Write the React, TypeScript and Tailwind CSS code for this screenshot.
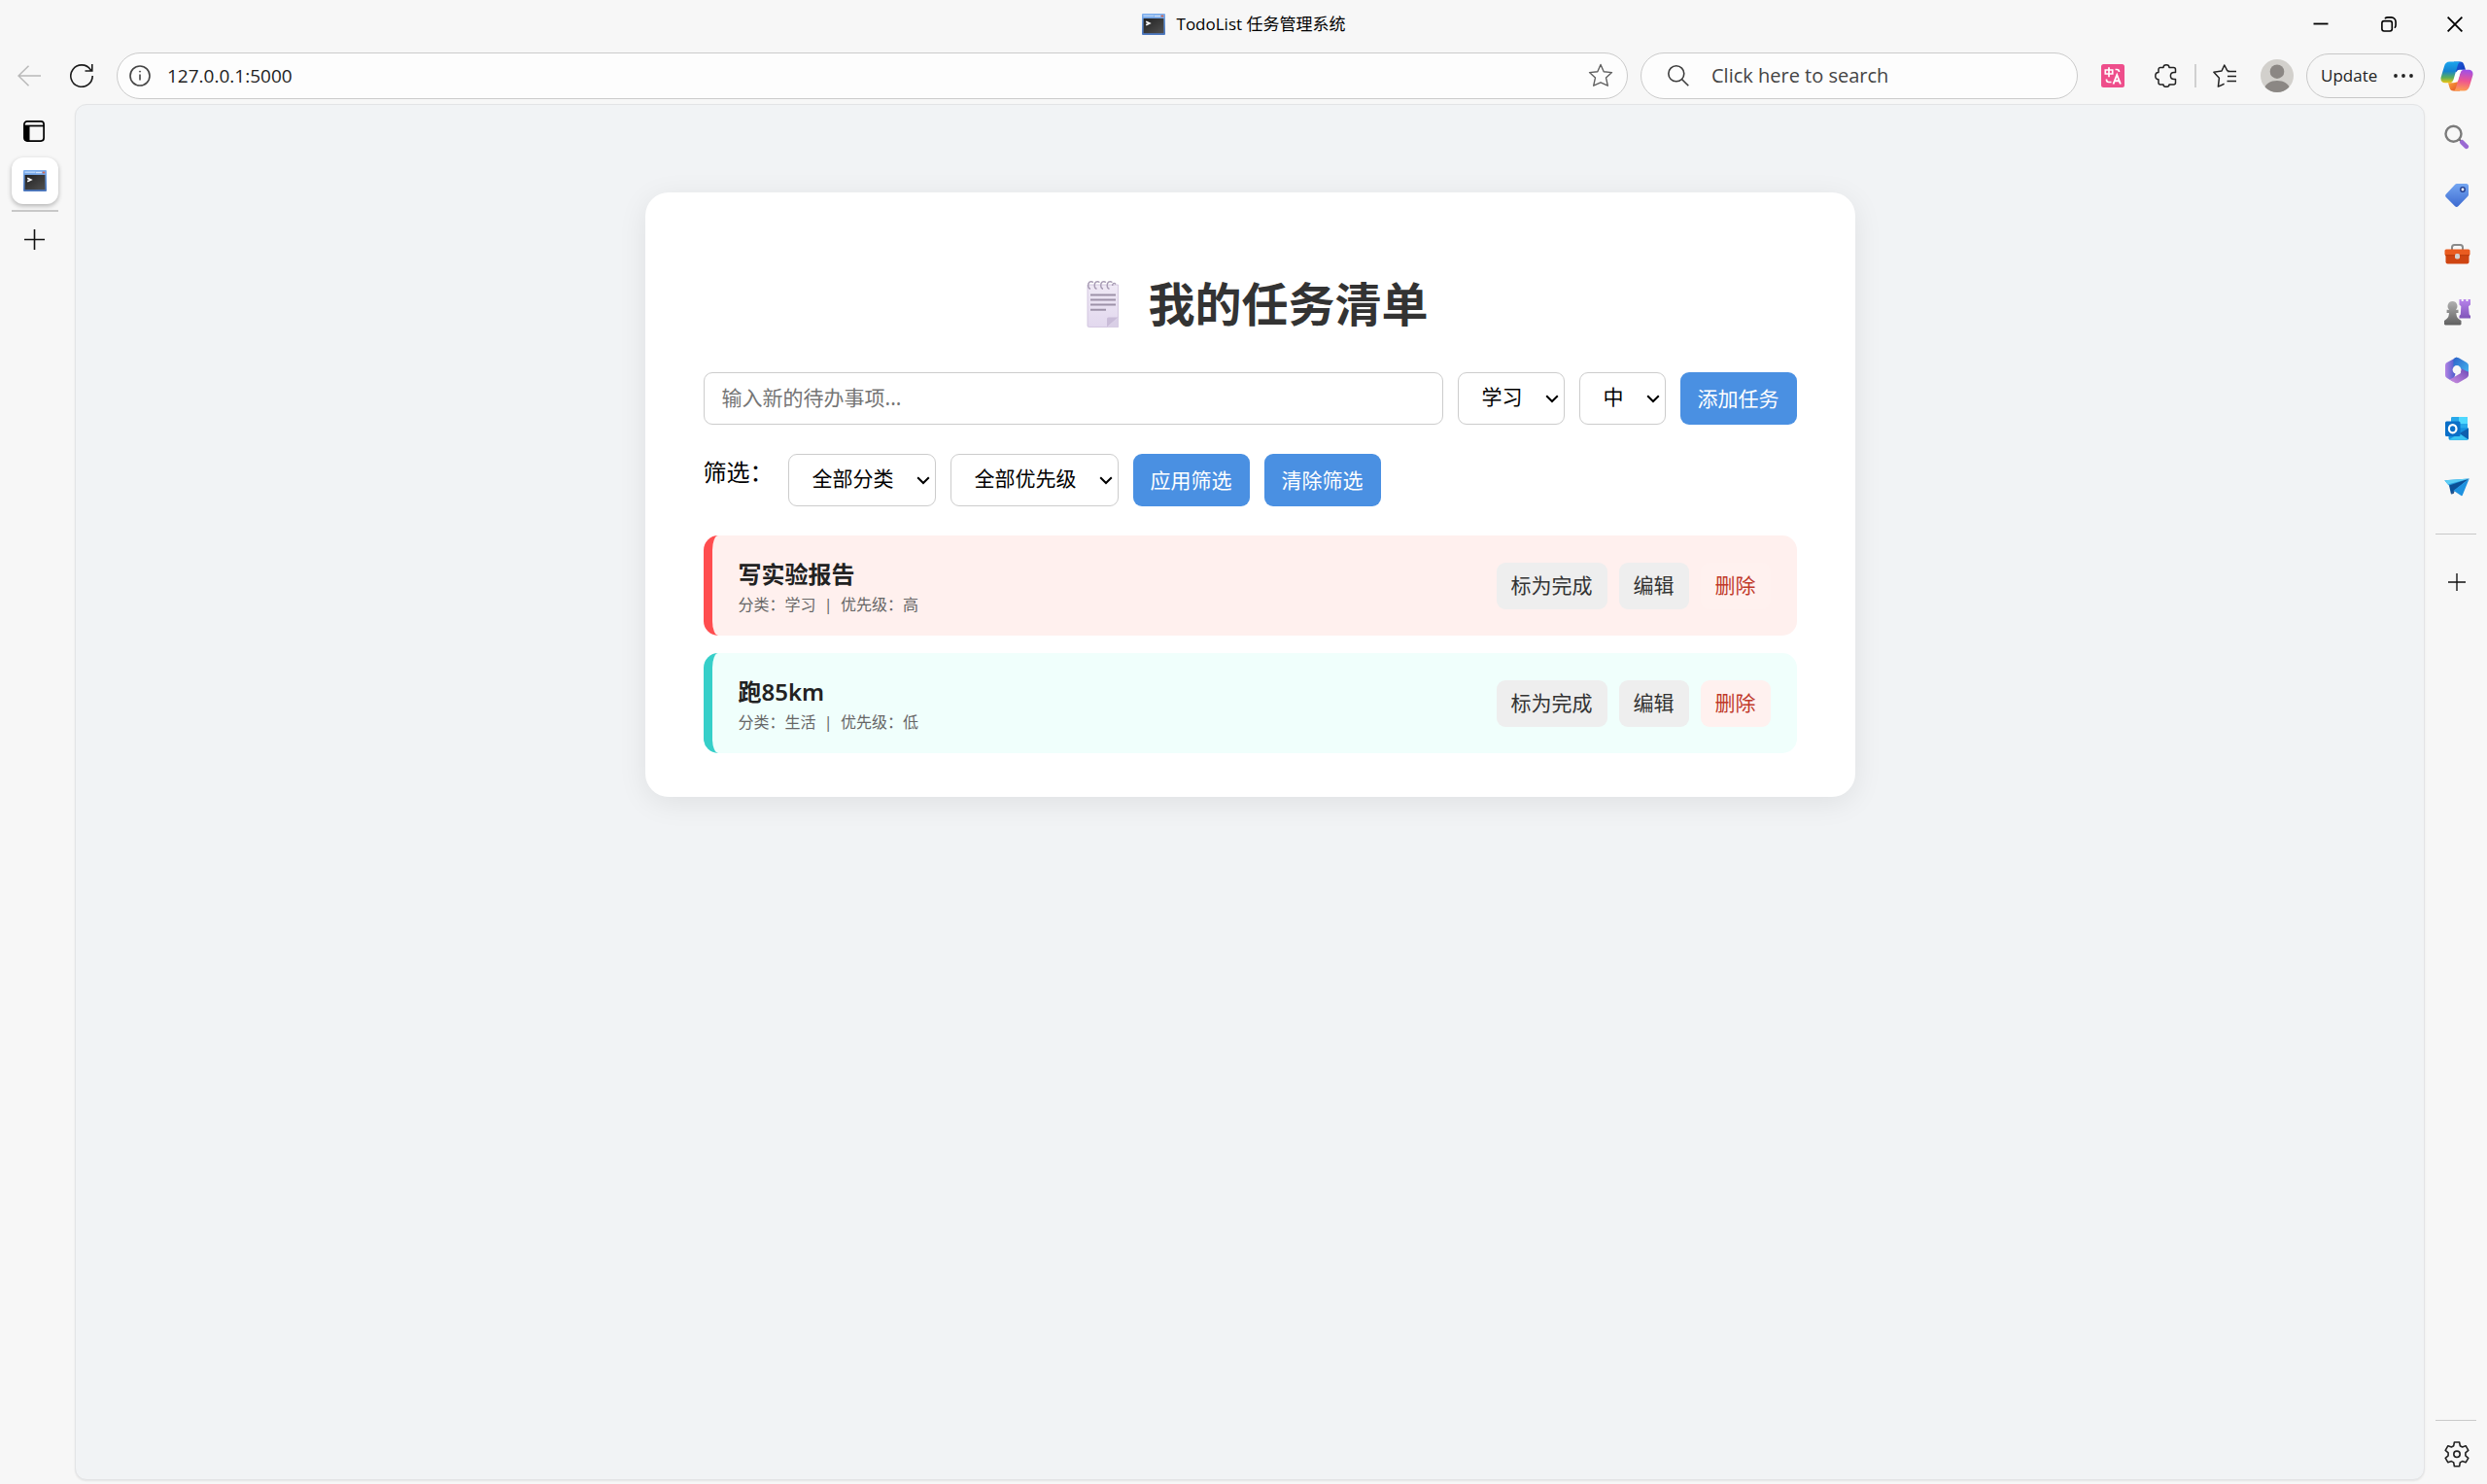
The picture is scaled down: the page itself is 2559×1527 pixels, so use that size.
import React, { useState } from "react";

const CHROME_FONT = "font-['Open_Sans','Noto_Sans_CJK_SC',sans-serif]";

function TerminalIcon() {
  return (
    <svg width="24" height="22" viewBox="0 0 24 22" aria-hidden="true">
      <defs>
        <linearGradient id="termFrame" x1="0" y1="0" x2="0" y2="1">
          <stop offset="0" stopColor="#7fb0ee" />
          <stop offset="1" stopColor="#4a76bf" />
        </linearGradient>
        <linearGradient id="termBody" x1="0" y1="0" x2="1" y2="1">
          <stop offset="0" stopColor="#222" />
          <stop offset="1" stopColor="#505050" />
        </linearGradient>
      </defs>
      <rect width="24" height="22" rx="1" fill="url(#termFrame)" />
      <rect x="1.5" y="1.5" width="11" height="1.6" fill="#b4d2f8" />
      <rect x="13" y="1.8" width="6" height="1.4" fill="#d5e4f8" />
      <rect x="19.8" y="1.6" width="2.4" height="1.8" fill="#d8674f" />
      <rect x="1.6" y="5" width="20.8" height="15.2" fill="url(#termBody)" />
      <path d="M4.2 8.2 7.8 10 4.2 11.8" fill="none" stroke="#fff" strokeWidth="1.7" />
    </svg>
  );
}

function IconButton({ label, className = "", children }: { label: string; className?: string; children: React.ReactNode }) {
  return (
    <button type="button" aria-label={label} className={`flex shrink-0 items-center justify-center ${className}`}>
      {children}
    </button>
  );
}

function PlusIcon({ size }: { size: number }) {
  return (
    <svg width={size} height={size} viewBox="0 0 21 21" fill="none" stroke="#111" strokeWidth="1.6" aria-hidden="true">
      <path d="M10.5 0v21M0 10.5h21" />
    </svg>
  );
}

function TitleBar() {
  return (
    <header className="flex h-[50px] items-center">
      <div className="flex-1" />
      <div className="flex items-center gap-3">
        <TerminalIcon />
        <span className={`${CHROME_FONT} text-[17px] leading-6 whitespace-nowrap text-black`}>TodoList 任务管理系统</span>
      </div>
      <div className="flex flex-1 items-center justify-end">
        <IconButton label="Minimize" className="h-12 w-[70px]">
          <svg width="16" height="16" viewBox="0 0 16 16" stroke="#000" strokeWidth="1.8" aria-hidden="true"><path d="M.5 7.5h15" /></svg>
        </IconButton>
        <IconButton label="Restore" className="h-12 w-[70px]">
          <svg width="16" height="16" viewBox="0 0 16 16" fill="none" stroke="#000" strokeWidth="1.6" strokeLinecap="round" aria-hidden="true">
            <rect x=".9" y="4.6" width="10.4" height="10.4" rx="2.2" />
            <path d="M4.400 1.600C5 1 5.800.900 6.800.900h3.800A4.500 4.500 0 0 1 15.100 5.400v3.400c0 1-.2 1.800-.8 2.400" />
          </svg>
        </IconButton>
        <IconButton label="Close" className="h-12 w-[66px]">
          <svg width="16" height="16" viewBox="0 0 16 16" stroke="#000" strokeWidth="1.8" aria-hidden="true"><path d="m.6.6 14.8 14.8M15.4.6.6 15.4" /></svg>
        </IconButton>
      </div>
    </header>
  );
}

function CopilotIcon() {
  return (
    <svg width="34" height="31" viewBox="0 0 34 31" aria-hidden="true">
      <defs>
        <linearGradient id="cpA" x1="0" y1="0" x2="0" y2="1">
          <stop offset="0" stopColor="#1aa5ee" /><stop offset=".45" stopColor="#1583cf" />
          <stop offset=".75" stopColor="#5cae5a" /><stop offset="1" stopColor="#f2c510" />
        </linearGradient>
        <linearGradient id="cpB" x1=".3" y1="0" x2=".2" y2="1">
          <stop offset="0" stopColor="#a050e6" /><stop offset=".5" stopColor="#ee5590" /><stop offset="1" stopColor="#ffa24c" />
        </linearGradient>
        <linearGradient id="cpC" x1="0" y1="0" x2="1" y2="1">
          <stop offset="0" stopColor="#1b66dd" /><stop offset="1" stopColor="#1330b8" />
        </linearGradient>
        <linearGradient id="cpD" x1="0" y1="0" x2="1" y2="1">
          <stop offset="0" stopColor="#ffb03a" /><stop offset="1" stopColor="#dd4528" />
        </linearGradient>
      </defs>
      <path d="M14 .5h6.500c2.300 0 3.200 1.200 3.900 3.300l1.600 5H20c-2 0-3 1-3.600 3L13 5z" fill="url(#cpC)" />
      <path d="M20 30.500h-6.500c-2.300 0-3.300-1.200-4-3.300L8 22.300h5.500c2 0 3-1 3.600-3L21 26z" fill="url(#cpD)" />
      <path d="M9.500.5H21c-1.700.3-2.500 1.700-3.100 3.600L13.600 18.600c-.7 2.300-1.800 3.700-4.200 3.700H5C1.200 22.300-.2 19.400.8 16L4 5.200C5 2 6.600.5 9.500.5z" fill="url(#cpA)" />
      <path d="M24.500 30.500H13c1.700-.3 2.500-1.700 3.100-3.600l4.300-14.500c.7-2.300 1.800-3.700 4.200-3.700H29c3.800 0 5.200 2.900 4.200 6.300L30 25.800c-1 3.200-2.600 4.700-5.500 4.700z" fill="url(#cpB)" />
      <path d="M20 9.300h1.800c-.8.700-1.200 1.800-1.600 3.100L17.500 21.600H12.600c.8-.7 1.200-1.800 1.600-3.100l2-6.500c.6-1.800 1.700-2.700 3.800-2.700z" fill="#fff" />
    </svg>
  );
}

function Toolbar() {
  return (
    <div className={`flex h-14 items-center ${CHROME_FONT}`}>
      <IconButton label="Back" className="ml-3 w-9">
        <svg width="24" height="22" viewBox="0 0 24 22" fill="none" stroke="#b9b9b9" strokeWidth="1.5" aria-hidden="true"><path d="M24 11H1M11.500.7 1 11l10.500 10.300" /></svg>
      </IconButton>
      <IconButton label="Refresh" className="ml-[18px] w-9">
        <svg width="24" height="24" viewBox="0 0 24 24" fill="none" stroke="#1c1c1c" strokeWidth="1.6" aria-hidden="true">
          <path d="M23.200 12A11.200 11.200 0 1 1 21.200 5.700L22 7M22.800 0v7H15.500" />
        </svg>
      </IconButton>
      <div className="ml-[18px] flex h-12 flex-1 items-center rounded-full border border-[#cbcbcb] bg-[#fdfdfd] pr-[14px] pl-3">
        <IconButton label="View site information">
          <svg width="22" height="22" viewBox="0 0 22 22" fill="none" stroke="#444" strokeWidth="1.6" aria-hidden="true">
            <circle cx="11" cy="11" r="10" /><path d="M11 9.500V15.500" /><circle cx="11" cy="6.600" r=".6" fill="#444" strokeWidth=".8" />
          </svg>
        </IconButton>
        <input aria-label="Address" defaultValue="127.0.0.1:5000" className="ml-[17px] min-w-0 flex-1 bg-transparent text-[19px] leading-7 text-[#222] outline-none" />
        <IconButton label="Add to favorites">
          <svg width="26" height="26" viewBox="0 0 26 26" fill="none" stroke="#606060" strokeWidth="1.4" strokeLinejoin="round" aria-hidden="true">
            <path d="m13 1.500 3.200 7.200 8.300.9-6 5.300 1.800 8.300L13 19.800l-7.300 3.400 1.800-8.300-6-5.300 8.300-.9z" />
          </svg>
        </IconButton>
      </div>
      <label className="ml-[13px] flex h-12 w-[450px] items-center rounded-full border border-[#cbcbcb] bg-[#fdfdfd] pl-[27px]">
        <svg width="22" height="22" viewBox="0 0 22 22" fill="none" stroke="#3c3c3c" strokeWidth="1.6" aria-hidden="true">
          <circle cx="8.800" cy="8.800" r="8" /><path d="m14.500 14.500 6.800 6.800" />
        </svg>
        <input aria-label="Search" placeholder="Click here to search" className="ml-[23px] min-w-0 flex-1 bg-transparent text-xl leading-7 outline-none placeholder:text-[#444]" />
      </label>
      <IconButton label="Translate" className="ml-6">
        <svg width="24" height="24" viewBox="0 0 24 24" fill="none" stroke="#fff" strokeWidth="1.700" aria-hidden="true">
          <rect width="24" height="24" rx="2.500" fill="#ee4e8b" stroke="none" />
          <path d="M4.300 6h7.400v4H4.300zM8 3.300v10" />
          <path d="M14.500 5.500h1.500c1.500 0 2.500 1 2.500 2.500M5.500 15.500v.800c0 1.500 1 2.200 2.300 2.200h2.700" />
          <path d="m12.500 20.500 3.700-9.500 3.700 9.500M13.700 17.300h5" strokeWidth="1.900" />
        </svg>
      </IconButton>
      <IconButton label="Extensions" className="ml-[31px]">
        <svg width="24" height="24" viewBox="0 0 24 24" fill="none" stroke="#222" strokeWidth="1.500" strokeLinejoin="round" aria-hidden="true">
          <path d="M4 5.500a2 2 0 0 1 2-2h3C9 1.700 10.300.8 12 .8s3 .9 3 2.700h4.500a2 2 0 0 1 2 2v3H20c-2.300 0-3.600 1.500-3.600 3.500s1.300 3.500 3.600 3.500h1.500V19a2 2 0 0 1-2 2H15c0 1.600-1.300 2.300-3 2.300S9 22.600 9 21H6a2 2 0 0 1-2-2v-3.200C2 15.800.8 14.200.8 12.200S2 8.500 4 8.500z" />
        </svg>
      </IconButton>
      <div className="ml-[17px] h-6 w-0.5 bg-[#d0d0d0]" />
      <IconButton label="Favorites" className="ml-[17px]">
        <svg width="24" height="24" viewBox="0 0 24 24" fill="none" stroke="#222" strokeWidth="1.500" strokeLinejoin="round" aria-hidden="true">
          <path d="m16.500 7-1.800-.3L11.800 1 9 7 .9 8.300l5.500 6-1 8.800 6.200-2.800M15 12.500h9M15 7.500h9M14.500 17.500H24" />
        </svg>
      </IconButton>
      <IconButton label="Profile" className="ml-[25px]">
        <svg width="34" height="34" viewBox="0 0 34 34" aria-hidden="true">
          <defs><clipPath id="avatarClip"><circle cx="17" cy="17" r="17" /></clipPath></defs>
          <g clipPath="url(#avatarClip)">
            <rect width="34" height="34" fill="#d2d0cc" />
            <circle cx="17" cy="12.700" r="7.300" fill="#8b8784" />
            <path d="M4 30c1-4.500 6-8 13-8s12 3.500 13 8v4H4z" fill="#8b8784" />
          </g>
        </svg>
      </IconButton>
      <button type="button" className="ml-[13px] flex h-[46px] w-[122px] items-center rounded-full border border-[#c8c8c8] pl-[14px] text-[17px] text-[#222]">
        Update
        <svg className="ml-auto mr-[11px]" width="20" height="4" viewBox="0 0 20 4" fill="#222" aria-hidden="true"><circle cx="2" cy="2" r="1.900" /><circle cx="10" cy="2" r="1.900" /><circle cx="18" cy="2" r="1.900" /></svg>
      </button>
      <IconButton label="Copilot" className="w-16 pl-0.5"><CopilotIcon /></IconButton>
    </div>
  );
}

function LeftTabs() {
  return (
    <nav aria-label="Tabs" className="flex w-[77px] shrink-0 flex-col items-start pt-[18px] pl-3">
      <IconButton label="Tab actions" className="w-[46px]">
        <svg width="22" height="22" viewBox="0 0 22 22" fill="none" stroke="#000" strokeWidth="1.700" aria-hidden="true">
          <rect x=".9" y=".9" width="20.200" height="20.200" rx="3" /><path d="M1 5.500h20" /><path d="M1 5.500h5.500V21H3.500A2.500 2.500 0 0 1 1 18.500z" fill="#000" stroke="none" />
        </svg>
      </IconButton>
      <IconButton label="TodoList 任务管理系统" className="mt-4 h-12 w-12 rounded-xl bg-white shadow-[0_2px_5px_rgba(0,0,0,0.28)]">
        <TerminalIcon />
      </IconButton>
      <div className="mt-1.5 h-0.5 w-12 bg-[#c8c8c8]" />
      <IconButton label="New tab" className="mt-[18px] w-[47px]"><PlusIcon size={21} /></IconButton>
    </nav>
  );
}

function SearchColor() {
  return (
    <svg width="26" height="26" viewBox="0 0 26 26" fill="none" aria-hidden="true">
      <circle cx="9.500" cy="9.800" r="8" stroke="#7b7b7b" strokeWidth="2.400" />
      <path d="m15.500 15.500 3 3" stroke="#6d6d6d" strokeWidth="2" />
      <path d="m18.300 18.300 4.500 4.500" stroke="#9a6ad2" strokeWidth="4.600" strokeLinecap="round" />
    </svg>
  );
}
function TagColor() {
  return (
    <svg width="26" height="26" viewBox="0 0 26 26" aria-hidden="true">
      <defs><linearGradient id="tagG" x1="0" y1="0" x2="0" y2="1"><stop offset="0" stopColor="#74a6f2" /><stop offset="1" stopColor="#3d6ad0" /></linearGradient></defs>
      <path d="M13 1h9.500A2.500 2.500 0 0 1 25 3.500V12c0 1-.3 1.600-1 2.300l-9.700 9.900c-1 1-2.200 1-3.200 0L1.900 15c-1-1-1-2.200 0-3.200L11 1.900c.6-.6 1.200-.9 2-.9z" fill="url(#tagG)" />
      <circle cx="19" cy="7" r="2.200" fill="#fff" stroke="#25408e" strokeWidth="1.500" />
    </svg>
  );
}
function ToolboxColor() {
  return (
    <svg width="27" height="22" viewBox="0 0 27 22" aria-hidden="true">
      <path d="M8 7V4.500A2.500 2.500 0 0 1 10.500 2h6A2.500 2.500 0 0 1 19 4.500V7" fill="none" stroke="#8a8a8a" strokeWidth="2" />
      <path d="M1.500 11h24v8.500a2 2 0 0 1-2 2h-20a2 2 0 0 1-2-2z" fill="#cf4512" />
      <rect x=".5" y="6.500" width="26" height="6.200" rx="1.500" fill="#ea5c20" />
      <path d="M1 12.700h25" stroke="#b53a0d" />
      <rect x="11" y="11" width="5" height="5.500" rx="1.800" fill="#d2d2d2" />
    </svg>
  );
}
function ChessColor() {
  return (
    <svg width="27" height="28" viewBox="0 0 27 28" aria-hidden="true">
      <defs>
        <linearGradient id="rook" x1="0" y1="0" x2="0" y2="1"><stop offset="0" stopColor="#b884ec" /><stop offset="1" stopColor="#8055b8" /></linearGradient>
        <linearGradient id="pawn" x1="0" y1="0" x2="0" y2="1"><stop offset="0" stopColor="#b0b0b0" /><stop offset="1" stopColor="#606060" /></linearGradient>
      </defs>
      <path d="M15.500 1h2.200v2h2V1h2.800v2h2V1H27v5.500l-2 1.700.7 8.300 1.300 1.500v2.500H15.500V18l1.300-1.500.5-8.300-1.800-1.700z" fill="url(#rook)" />
      <path d="M8.500 3a5 5 0 0 1 3.300 8.700h2.700v3.200h-2.200c.2 3 .9 4.800 2.400 6.200l2.800 2v3.200c0 .7-.5 1.200-1.200 1.200H1.200C.5 27.500 0 27 0 26.300v-3.200l2.600-2c1.500-1.400 2.200-3.200 2.400-6.200H2.600v-3.200h2.600A5 5 0 0 1 8.500 3z" fill="url(#pawn)" />
    </svg>
  );
}
function OfficeColor() {
  return (
    <svg width="26" height="28" viewBox="0 0 26 28" aria-hidden="true">
      <defs>
        <linearGradient id="ofA" x1="0" y1="0" x2="1" y2="0"><stop offset="0" stopColor="#b483e4" /><stop offset="1" stopColor="#3a56c8" /></linearGradient>
        <linearGradient id="ofB" x1="0" y1="0" x2="1" y2="1"><stop offset="0" stopColor="#2b62c8" /><stop offset="1" stopColor="#46b8f0" /></linearGradient>
        <linearGradient id="ofC" x1="0" y1="1" x2="1" y2="0"><stop offset="0" stopColor="#d090e2" /><stop offset="1" stopColor="#6b49b6" /></linearGradient>
      </defs>
      <path d="M13 .6 2.800 6C1.600 6.700 1 7.700 1 9.200v9.600c0 1.500.6 2.500 1.800 3.200L9 25.500l3.800-12z" fill="url(#ofA)" />
      <path d="M10.900 1.200c1.300-.7 2.700-.7 4 0L23 5.900c1.300.8 2 1.900 2 3.400v8.500l-8-4.500-7.500-3.300V4.500c0-1.500.3-2.500 1.400-3.300z" fill="url(#ofB)" />
      <path d="M25 16v2.800c0 1.400-.7 2.400-2 3.200L14.900 26.800c-1.300.7-2.700.7-4 0L4.500 23c1 .2 2 0 3-.6l9.400-5.500v-5l5.100 2.500c1.500.7 3 .6 3 1.600z" fill="url(#ofC)" />
      <circle cx="13" cy="13.500" r="4.400" fill="#f7f7f7" />
    </svg>
  );
}
function OutlookColor() {
  return (
    <svg width="26" height="26" viewBox="0 0 26 26" aria-hidden="true">
      <rect x="7" y="1" width="17" height="15" rx="1.200" fill="#28a8ea" />
      <path d="M15 1h8a1 1 0 0 1 1 1v6h-9z" fill="#50d9ff" /><path d="M7 8h8v7H7z" fill="#0364b8" />
      <path d="M4.500 12 25 12.500V23a1.700 1.700 0 0 1-1.700 1.700H6.200A1.700 1.700 0 0 1 4.500 23z" fill="#1490df" />
      <path d="M25 12.500 15.500 18l9.300 6c.2-.3.200-.6.200-1z" fill="#0f5fae" />
      <path d="M5 24.200 15.500 18l9 6.200c-.3.300-.7.500-1.200.5H6.200c-.5 0-.9-.2-1.200-.5z" fill="#38c4f2" />
      <rect x="1" y="5.500" width="15.500" height="15.500" rx="1.500" fill="#0a6fc8" />
      <ellipse cx="8.700" cy="13.200" rx="3.800" ry="4.100" fill="none" stroke="#fff" strokeWidth="2.200" />
    </svg>
  );
}
function PlaneColor() {
  return (
    <svg width="26" height="19" viewBox="0 0 26 19" aria-hidden="true">
      <path d="M.3 2.300 25.700.5 6.500 9.500z" fill="#2398dc" />
      <path d="M25.700.5 5 7.500l2 9 4-4z" fill="#0c4f96" />
      <path d="M7 16.500 11 12.500 9.500 16z" fill="#133a70" />
      <path d="M25.700.5 18.800 17.500c-.3.700-.8.800-1.400.4L9.500 12.800z" fill="#1e92e0" />
      <path d="M.3 2.300 25.700.5 3.800 6.500z" fill="#5ccdf5" />
    </svg>
  );
}

const SIDEBAR_APPS = [
  { name: "Search", Icon: SearchColor },
  { name: "Shopping", Icon: TagColor },
  { name: "Tools", Icon: ToolboxColor },
  { name: "Games", Icon: ChessColor },
  { name: "Microsoft 365", Icon: OfficeColor },
  { name: "Outlook", Icon: OutlookColor },
  { name: "Drop", Icon: PlaneColor },
];

function RightSidebar() {
  return (
    <aside aria-label="Sidebar" className="flex w-16 shrink-0 flex-col items-center">
      <div className="flex flex-col items-center gap-3 pt-[11px]">
        {SIDEBAR_APPS.map(({ name, Icon }) => (
          <IconButton key={name} label={name} className="h-12 w-16 pl-0.5"><Icon /></IconButton>
        ))}
      </div>
      <div className="mt-6 h-px w-[42px] bg-[#c9c9c9]" />
      <IconButton label="Customize sidebar" className="mt-10 w-16 pl-0.5"><PlusIcon size={18} /></IconButton>
      <div className="mt-auto h-px w-[42px] bg-[#c9c9c9]" />
      <IconButton label="Settings" className="mt-[21px] mb-[17px] w-16 pl-0.5">
        <svg width="26" height="27" viewBox="0 0 26 27" fill="none" stroke="#222" strokeWidth="1.600" strokeLinejoin="round" aria-hidden="true">
          <path d="M10.400 1h5.200l.7 3.700 2.300 1.300 3.500-1.300 2.700 4.600-2.900 2.500v3l2.900 2.500-2.700 4.500-3.500-1.200-2.300 1.300-.7 3.900h-5.200l-.7-3.900-2.300-1.300-3.500 1.200-2.700-4.500 2.900-2.500v-3L1.200 9.300l2.700-4.600L7.400 6l2.300-1.300z" />
          <circle cx="13" cy="13.300" r="3.200" />
        </svg>
      </IconButton>
    </aside>
  );
}

function NotepadIcon() {
  return (
    <svg width="66" height="50" viewBox="0 0 66 50" aria-hidden="true">
      <defs><linearGradient id="noteG" x1="0" y1="0" x2="0" y2="1"><stop offset="0" stopColor="#efe9f5" /><stop offset="1" stopColor="#e2d8ee" /></linearGradient></defs>
      <path d="M17 5h31.500v43.500H18.500A1.500 1.500 0 0 1 17 47z" fill="url(#noteG)" stroke="#cdbfdb" strokeWidth=".8" />
      <path d="M37 48.500V40a1.500 1.500 0 0 1 1.500-1.500h10z" fill="#c9bcd8" /><path d="M48.500 38.500v10H37z" fill="#d9cfe6" />
      <g fill="none" stroke="#a79bb3" strokeWidth="1.400">
        <path d="M23 2.500c-3-2-5.500 0-5.300 3.500.1 1.700 1 3 2.300 3.200M29.500 2.500c-3-2-5.500 0-5.300 3.500.1 1.700 1 3 2.300 3.200M36 2.500c-3-2-5.500 0-5.300 3.500.1 1.700 1 3 2.300 3.200M42.500 2.500c-3-2-5.500 0-5.300 3.500.1 1.700 1 3 2.300 3.200M46 4.500c-1.500-2-3.500-1-3.300 1.500" />
      </g>
      <path d="M20 15.500h26M20 20.500h26M20 25.500h26M20 30.700h16" stroke="#9d92a8" strokeWidth="1.900" />
    </svg>
  );
}

function SelectBox({ label, options, className }: { label: string; options: string[]; className: string }) {
  return (
    <div className={`relative h-[54px] shrink-0 ${className}`}>
      <select aria-label={label} className="h-full w-full appearance-none rounded-[9px] border border-[#ccc] bg-white pb-0.5 pl-6 text-[21px] text-black">
        {options.map((o) => <option key={o}>{o}</option>)}
      </select>
      <svg className="pointer-events-none absolute top-[23px] right-1.5" width="14" height="9" viewBox="0 0 14 9" fill="none" stroke="#000" strokeWidth="2" aria-hidden="true"><path d="m1.200 1.200 5.800 5.800 5.800-5.800" /></svg>
    </div>
  );
}

function PrimaryButton({ children, type = "button" }: { children: React.ReactNode; type?: "button" | "submit" }) {
  return (
    <button type={type} className="h-[54px] shrink-0 rounded-[9px] bg-[#4a90e2] px-[18px] pt-0.5 text-[21px] whitespace-nowrap text-white">
      {children}
    </button>
  );
}

const TASKS = [
  { title: "写实验报告", category: "学习", priority: "高", tone: "border-[#ff4d4f] bg-[#fff0ee]" },
  { title: "跑85km", category: "生活", priority: "低", tone: "border-[#36cfc9] bg-[#f0fffc]" },
];

function TodoCard() {
  const [text, setText] = useState("");
  return (
    <section className="mx-auto max-w-[1245px] rounded-3xl bg-white px-[60px] pt-[79px] pb-[45px] font-['Noto_Sans','Noto_Sans_CJK_SC',sans-serif] shadow-[0_6px_30px_rgba(0,0,0,0.08)]">
      <h1 className="mb-[34px] flex items-center justify-center gap-[13px] text-5xl leading-[72px] font-bold text-[#333]">
        <NotepadIcon />
        我的任务清单
      </h1>
      <form className="flex gap-[15px]" onSubmit={(e) => e.preventDefault()}>
        <input
          aria-label="新的待办事项"
          value={text}
          onChange={(e) => setText(e.target.value)}
          placeholder="输入新的待办事项..."
          className="h-[54px] min-w-0 flex-1 rounded-[9px] border border-[#ccc] px-[18px] pb-0.5 text-[21px] placeholder:text-[#757575]"
        />
        <SelectBox label="分类" options={["学习", "生活", "工作"]} className="w-[110px]" />
        <SelectBox label="优先级" options={["中", "高", "低"]} className="w-[89px]" />
        <PrimaryButton type="submit">添加任务</PrimaryButton>
      </form>
      <div className="mt-[30px] flex gap-[15px]">
        <span className="text-2xl leading-[38px] text-black">筛选：</span>
        <SelectBox label="按分类筛选" options={["全部分类", "学习", "生活"]} className="w-[152px]" />
        <SelectBox label="按优先级筛选" options={["全部优先级", "高", "中", "低"]} className="w-[173px]" />
        <PrimaryButton>应用筛选</PrimaryButton>
        <PrimaryButton>清除筛选</PrimaryButton>
      </div>
      <ul className="mt-[30px] flex flex-col gap-[18px]">
        {TASKS.map((t) => (
          <li key={t.title} className={`flex items-center justify-between rounded-[15px] border-l-[9px] py-5 pr-[27px] pl-[27px] ${t.tone}`}>
            <div>
              <div className="text-2xl leading-10 font-semibold text-[#222]">{t.title}</div>
              <div className="text-base leading-[23px] whitespace-pre text-[#666]">{`分类：${t.category}  |  优先级：${t.priority}`}</div>
            </div>
            <div className="flex gap-3 text-[21px] text-[#333]">
              <button type="button" className="h-12 rounded-[9px] bg-[#eee] px-[15px]">标为完成</button>
              <button type="button" className="h-12 rounded-[9px] bg-[#eee] px-[15px]">编辑</button>
              <button type="button" className="h-12 rounded-[9px] bg-[#fff1ef] px-[15px] text-[#c0392b]">删除</button>
            </div>
          </li>
        ))}
      </ul>
    </section>
  );
}

export default function App() {
  return (
    <div className="flex min-h-screen flex-col bg-[#f7f7f7]">
      <TitleBar />
      <Toolbar />
      <div className="flex flex-1">
        <LeftTabs />
        <div className="flex flex-1 pt-px pb-1">
          <main className="flex-1 rounded-xl border border-[#e3e4e6] bg-[#f1f3f5] px-6 pt-[90px] shadow-[0_1px_2px_rgba(0,0,0,0.08)]">
            <TodoCard />
          </main>
        </div>
        <RightSidebar />
      </div>
    </div>
  );
}
